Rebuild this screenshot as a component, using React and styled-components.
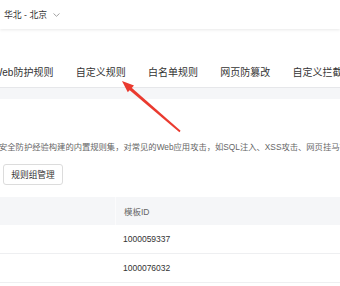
import React from "react";
import styled, { createGlobalStyle } from "styled-components";

const Global = createGlobalStyle`
  html, body { margin: 0; padding: 0; background: #fff; }
  body {
    width: 340px; height: 286px; overflow: hidden;
    font-family: "Liberation Sans", "Noto Sans CJK SC", Arial, sans-serif;
    color: #333;
  }
`;

const Page = styled.div`
  position: relative;
  width: 340px;
  height: 286px;
  overflow: hidden;
`;

const Header = styled.header`
  height: 29px;
  display: flex;
  align-items: center;
  padding-left: 4px;
  gap: 6px;
  box-shadow: 0 1px 3px rgba(0, 0, 0, 0.09);
  position: relative;
  z-index: 1;
`;

const Region = styled.span`
  font-size: 8.8px;
  color: #333;
  white-space: nowrap;
`;

const TabBar = styled.nav`
  height: 59px;
  display: flex;
  align-items: flex-end;
  border-bottom: 1px solid #e6e7ea;
  box-sizing: border-box;
  white-space: nowrap;
`;

const TabList = styled.div`
  display: flex;
  gap: 22.3px;
  margin-left: -7px;
`;

const Tab = styled.div`
  height: 28px;
  line-height: 28px;
  font-size: 10px;
  color: ${(p) => (p.$active ? "#333" : "#333")};
  flex: none;
`;

const Band = styled.div`
  height: 11px;
  background: #f5f6f8;
`;

const Body = styled.section`
  padding-top: 42px;
`;

const Desc = styled.p`
  margin: 0 0 0 -1px;
  height: 12px;
  line-height: 12px;
  font-size: 8.3px;
  color: #666;
  white-space: nowrap;
`;

const Button = styled.button`
  margin: 11px 0 0 3px;
  width: 60px;
  height: 21px;
  border: 1px solid #dcdcdc;
  border-radius: 3px;
  background: #fff;
  font-family: inherit;
  font-size: 8.7px;
  color: #333;
  padding: 0;
  display: block;
`;

const Table = styled.div`
  margin-top: 12px;
`;

const HeadRow = styled.div`
  display: grid;
  grid-template-columns: 115px 1fr;
  height: 28px;
  background: #f5f6f8;
`;

const HeadCell = styled.div`
  display: flex;
  align-items: center;
  padding-left: 8px;
  font-size: 8.5px;
  color: #666;
  border-left: ${(p) => (p.$divider ? "1px solid #fbfbfc" : "none")};
`;

const Row = styled.div`
  display: grid;
  grid-template-columns: 116px 1fr;
  height: 29px;
  border-bottom: 1px solid #eeeff1;
  box-sizing: border-box;
`;

const Cell = styled.div`
  display: flex;
  align-items: center;
  padding-left: 7px;
  font-size: 8.5px;
  color: #333;
`;

const Arrow = styled.svg`
  position: absolute;
  left: 0;
  top: 0;
  pointer-events: none;
  z-index: 2;
`;

export default function App() {
  return (
    <Page>
      <Global />
      <Header>
        <Region>华北 - 北京</Region>
        <svg width="7" height="4" viewBox="0 0 7 4">
          <path d="M0.5 0.5 L3.5 3.3 L6.5 0.5" fill="none" stroke="#999" strokeWidth="0.9" />
        </svg>
      </Header>
      <TabBar>
        <TabList>
          <Tab>Web防护规则</Tab>
          <Tab $active>自定义规则</Tab>
          <Tab>白名单规则</Tab>
          <Tab>网页防篡改</Tab>
          <Tab>自定义拦截页面</Tab>
        </TabList>
      </TabBar>
      <Band />
      <Body>
        <Desc>安全防护经验构建的内置规则集，对常见的Web应用攻击，如SQL注入、XSS攻击、网页挂马等进行防护。</Desc>
        <Button>规则组管理</Button>
        <Table>
          <HeadRow>
            <HeadCell />
            <HeadCell $divider>模板ID</HeadCell>
          </HeadRow>
          <Row>
            <Cell />
            <Cell>1000059337</Cell>
          </Row>
          <Row>
            <Cell />
            <Cell>1000076032</Cell>
          </Row>
        </Table>
      </Body>
      <Arrow width="340" height="286" viewBox="0 0 340 286">
        <polygon points="180.6,130.8 179.4,132.2 128.5,89.2 130.5,86.8" fill="#ea3a2f" />
        <polygon points="122,81 134,85.6 127.8,92.2" fill="#ea3a2f" />
      </Arrow>
    </Page>
  );
}
